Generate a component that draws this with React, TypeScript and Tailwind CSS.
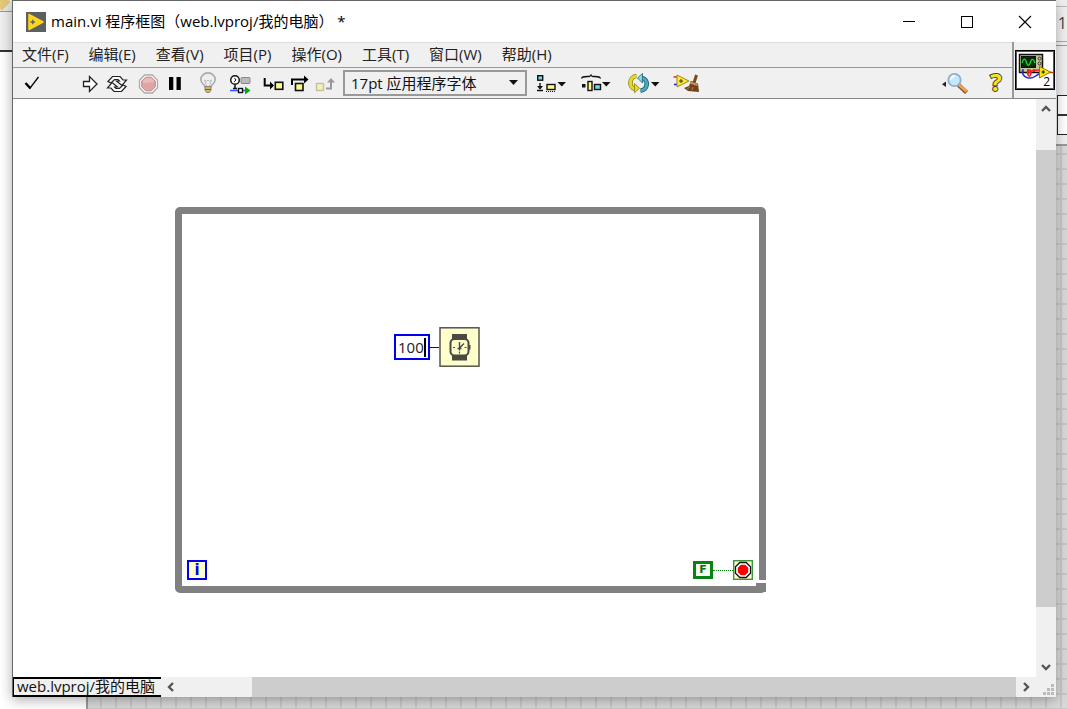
import React from "react";

const menus = ["文件(F)", "编辑(E)", "查看(V)", "项目(P)", "操作(O)", "工具(T)", "窗口(W)", "帮助(H)"];

function Tool({ label, w = 24, children }: { label: string; w?: number; children: React.ReactNode }) {
  return (
    <button type="button" aria-label={label} className="block shrink-0">
      <svg width={w} height={24} viewBox={`0 0 ${w} 24`} fill="none" className="block">
        {children}
      </svg>
    </button>
  );
}

const octagon = (cx: number, cy: number, r: number) => {
  const k = r * 0.42;
  return `${cx - k},${cy - r} ${cx + k},${cy - r} ${cx + r},${cy - k} ${cx + r},${cy + k} ${cx + k},${cy + r} ${cx - k},${cy + r} ${cx - r},${cy + k} ${cx - r},${cy - k}`;
};

function Backdrop() {
  return (
    <div aria-hidden="true" className="absolute inset-0 overflow-hidden bg-white">
      <div className="absolute inset-x-0 top-0 h-13 border-b-2 border-[#333] bg-[#f0f0f0]">
        <div className="h-3 border-b border-[#999] bg-[#e8e8e8]" />
        <div className="absolute -left-1 -top-1 size-3 rotate-45 bg-[#e3c878]" />
      </div>
      <div className="absolute right-0 top-0 h-36 w-[11px] bg-[#f0f0f0]">
        <div className="h-[7px] border-b border-[#bbb]" />
        <div className="h-[35px] border-b border-[#aaa] pt-1 text-right text-[16px] leading-6 text-[#444]">1</div>
        <div className="h-1 border-b border-[#999]" />
        <div className="h-[49px]" />
        <div className="ml-px h-10 border border-r-0 border-[#222] bg-white">
          <div className="h-5 border-b-2 border-[#333]" />
        </div>
      </div>
      <div className="absolute bottom-0 left-[86px] right-0 top-[144px] border-l-2 border-t-2 border-[#999] bg-[#d9d9d9] bg-[linear-gradient(to_right,#c8c8c8_2px,transparent_2px),linear-gradient(to_bottom,#c8c8c8_2px,transparent_2px)] bg-[size:15px_15px] bg-[position:12px_7px]" />
    </div>
  );
}

function TitleBar() {
  return (
    <header className="flex h-[41px] items-center bg-white">
      <svg width="20" height="20" viewBox="0 0 20 20" className="ml-[13px]">
        <rect width="20" height="20" fill="#5d6063" />
        <path d="M3 2.5 17 10 3 17.5z" fill="#ffd51c" stroke="#ffd51c" strokeWidth="1.5" strokeLinejoin="round" />
        <path d="M4.5 10h4.5M6.75 7.8v4.4" stroke="#5d6063" strokeWidth="1.3" />
      </svg>
      <h1 className="ml-[5px] flex-1 whitespace-pre pb-0.5 text-[15px] leading-5 text-black">main.vi 程序框图（web.lvproj/我的电脑） *</h1>
      <div className="mr-0.5 flex text-black">
        <button type="button" aria-label="最小化" className="flex h-10 w-[58px] items-center justify-center">
          <svg width="14" height="14"><path d="M1 6.5h12" stroke="currentColor" /></svg>
        </button>
        <button type="button" aria-label="最大化" className="flex h-10 w-[58px] items-center justify-center">
          <svg width="14" height="14"><rect x="1.5" y="1.5" width="11" height="11" fill="none" stroke="currentColor" /></svg>
        </button>
        <button type="button" aria-label="关闭" className="flex h-10 w-[58px] items-center justify-center">
          <svg width="14" height="14"><path d="m1 1 12 12M13 1 1 13" stroke="currentColor" strokeWidth="1.1" /></svg>
        </button>
      </div>
    </header>
  );
}

function Toolbar() {
  return (
    <div role="toolbar" className="flex h-[30px] items-center pl-[7px]">
      <Tool label="确认">
        <path d="M5.5 12 10.5 17.5" stroke="#000" strokeWidth="2.4" />
        <path d="M9.6 17.6 18.5 6" stroke="#000" strokeWidth="1.3" />
      </Tool>
      <div className="ml-[34px] flex gap-[3px]">
        <Tool label="运行">
          <path d="M5.5 10.5h6V5.500l7.500 7.500-7.500 7.500v-5h-6z" fill="#fff" stroke="#222" strokeWidth="1.300" />
        </Tool>
        <Tool label="连续运行">
          <path d="M3 10.500 7.500 5.500H15L18 9h3.500l-4.500 5.500-5.500-4.500h3L13 8.500H9.500L6 12z" fill="#fff" stroke="#222" strokeWidth="1.200" />
          <path d="M3 10.500 7.500 5.500H15L18 9h3.500l-4.500 5.500-5.500-4.500h3L13 8.500H9.500L6 12z" transform="rotate(180 12 13)" fill="#fff" stroke="#222" strokeWidth="1.200" />
        </Tool>
      </div>
      <div className="ml-2 flex gap-[2px]">
        <Tool label="中止执行">
          <polygon points={octagon(11.5, 13, 9)} fill="#fff" stroke="#aaa" strokeWidth="1.3" />
          <polygon points={octagon(11.5, 13, 6.8)} fill="#dfa4a6" stroke="#b88" />
          <path d="M6 12v-2l3-3h5l3 3v1z" fill="#e9bcbc" />
        </Tool>
        <Tool label="暂停">
          <path d="M6 6h4.3v13H6zM13.5 6h4.3v13h-4.3z" fill="#000" />
        </Tool>
      </div>
      <div className="ml-[9px] flex gap-2">
        <Tool label="高亮显示执行过程">
          <path d="M9 16c0-2-4.2-3.5-4.2-7.5a7.2 6.6 0 0 1 14.4 0C19.2 12.500 15 14 15 16z" fill="#eee" stroke="#aaa" strokeWidth="1.6" />
          <path d="M10.500 15 8.500 9l2 1.500L12 9l1.500 1.500 2-1.500-2 6" stroke="#bbb" />
          <path d="M9 15.500h6v4l-1.500 2h-3L9 19.500z" fill="#d2b65f" stroke="#777" strokeWidth=".8" />
          <path d="M9 18.500h6" stroke="#776633" />
        </Tool>
        <Tool label="保存连线值">
          <circle cx="7" cy="9" r="4.300" fill="#fff" stroke="#111" strokeWidth="1.500" />
          <path d="M6.500 7 8 9l-2 2" stroke="#111" />
          <path d="M7 13.500v4M5 17.500h4" stroke="#111" strokeWidth="1.500" />
          <rect x="13" y="6.500" width="9" height="6" rx="1" fill="#bbb" stroke="#888" />
          <path d="M2 19.500h8M14 19.500h3" stroke="#2a50ff" strokeWidth="1.500" />
          <rect x="10.500" y="17.500" width="4" height="4" fill="#fff" stroke="#111" strokeWidth="1.400" />
          <path d="M17 15.500 22.500 19.500 17 23.500z" fill="#00a800" />
        </Tool>
      </div>
      <div className="ml-[10px] flex gap-[2px]">
        <Tool label="单步步入">
          <path d="M2.700 7v7.500h6" stroke="#000" strokeWidth="2" />
          <path d="M8 10.500 12 14.500 8 18.500z" fill="#000" />
          <rect x="13.300" y="11.300" width="7.500" height="7" fill="#fdf98b" stroke="#111" strokeWidth="1.600" />
        </Tool>
        <Tool label="单步步过">
          <path d="M4 14V8.500h13" stroke="#000" strokeWidth="2" />
          <path d="M16 4.500 20.500 8.500 16 12.500z" fill="#000" />
          <rect x="7.500" y="12.500" width="7.500" height="7" fill="#fdf98b" stroke="#111" strokeWidth="1.600" />
        </Tool>
        <Tool label="单步步出">
          <rect x="2.500" y="12.500" width="7" height="7" fill="#f4f0b8" stroke="#c4c1a0" strokeWidth="1.400" />
          <path d="M12 17.500h5V10" stroke="#999" strokeWidth="2" />
          <path d="M13 11.500 17 7l4 4.500z" fill="#999" />
        </Tool>
      </div>
      <div className="relative ml-[5px]">
        <select aria-label="字体" className="block h-[26px] w-[184px] appearance-none rounded-none border-2 border-[#999] bg-[#f0f0f0] pl-[6px] text-[15px] leading-5 text-[#111] outline-none">
          <option>17pt 应用程序字体</option>
        </select>
        <svg width="9" height="5" className="pointer-events-none absolute right-[9px] top-[10px]"><path d="M0 0h9L4.500 5z" fill="#111" /></svg>
      </div>
      <div className="ml-2 flex gap-3">
        <Tool label="对齐对象" w={32}>
          <rect x="2.700" y="4.700" width="5" height="4.500" fill="#6cd8ee" stroke="#111" strokeWidth="1.400" />
          <path d="M5 12v6M2 19.500h6" stroke="#111" strokeWidth="1.400" />
          <path d="M2 15h6l-3 3.500z" fill="#111" />
          <rect x="12" y="13.500" width="8" height="5" fill="#fdf98b" stroke="#111" strokeWidth="1.400" />
          <path d="M11 20.500h10" stroke="#111" strokeDasharray="1 1" />
          <path d="M22.500 11h8.500l-4.200 4.500z" fill="#111" />
        </Tool>
        <Tool label="分布对象" w={32}>
          <path d="M2.500 7.500C3 5.500 5 5.500 8 5.500s3 0 4-1.500c1 1.500 1 1.500 4 1.500s5 0 5.500 2" stroke="#111" strokeWidth="1.300" />
          <rect x="3" y="13" width="3.500" height="3.500" fill="#111" />
          <rect x="9" y="10.500" width="4" height="9" fill="#fdf98b" stroke="#111" strokeWidth="1.400" />
          <rect x="15.500" y="13.500" width="6" height="5" fill="#6cd8ee" stroke="#111" strokeWidth="1.400" />
          <path d="M23 11h8.500l-4.200 4.500z" fill="#111" />
        </Tool>
      </div>
      <div className="ml-4 flex gap-3">
        <Tool label="重新排序" w={33}>
          <path d="M9.500 5C2.500 5.500 1 16 8 18" stroke="#8b8416" strokeWidth="4.600" />
          <path d="M9.500 5C2.500 5.500 1 16 8 18" stroke="#e5d928" strokeWidth="3" />
          <path d="M7.500 12.500 12.500 17.200 7.500 21.800z" fill="#e5d928" stroke="#8b8416" strokeWidth=".8" />
          <path d="M13.500 19.500C21 19 22 8.500 15 7" stroke="#155f70" strokeWidth="4.600" />
          <path d="M13.500 19.500C21 19 22 8.500 15 7" stroke="#4aa8c0" strokeWidth="3" />
          <path d="M15.500 2.500 10.500 7l5 5z" fill="#8ed6e4" stroke="#155f70" strokeWidth=".8" />
          <path d="M24 11h8.500l-4.200 4.500z" fill="#111" />
        </Tool>
        <Tool label="整理程序框图" w={28}>
          <path d="M1.500 6h6M18 11h4" stroke="#e22" strokeWidth="1.600" />
          <path d="M2 13.500h6" stroke="#22d" strokeWidth="1.600" />
          <path d="M5 4 17 10 5 16z" fill="#ffe82e" stroke="#9b8b20" />
          <path d="M7 10h4M9 8v4" stroke="#333" />
          <path d="m24.500 4-2.500 8" stroke="#7c471b" strokeWidth="3" />
          <path d="m18.500 11 7.500 1.500 1 8.500-11-1-4-3 5-2z" fill="#6f431f" />
          <path d="m18 11.500 7.500 2.500" stroke="#c69352" strokeWidth="2" />
          <path d="m15 18 3-2M20 19l1-3" stroke="#b08050" />
        </Tool>
      </div>
      <div className="ml-auto mr-[6px] flex items-center gap-4">
        <Tool label="搜索" w={30}>
          <path d="M6 10.500v5.500L2 13.200z" fill="#222" />
          <path d="m18.500 14 8 7.500" stroke="#8e5323" strokeWidth="4.400" />
          <path d="m18.500 13.500 8 7" stroke="#eda358" strokeWidth="2.600" />
          <circle cx="14.500" cy="9" r="6.200" fill="#c5e9fb" stroke="#8eafd0" strokeWidth="1.800" />
          <path d="M11 8.500a4 4 0 0 1 4-3.500" stroke="#fff" strokeWidth="2" />
        </Tool>
        <button type="button" aria-label="即时帮助" className="flex h-6 w-5 items-center justify-center pb-0.5 text-[24px] font-bold leading-6 text-[#f5e51b] [-webkit-text-stroke:2px_#444] [paint-order:stroke_fill]">?</button>
      </div>
    </div>
  );
}

function ViIcon() {
  return (
    <div className="flex w-11 shrink-0 items-center border-l-2 border-[#999] bg-[#f0f0f0] pl-px">
      <div className="relative size-10 border border-black bg-white outline-1 -outline-offset-2 outline-[#555]">
        <svg width="38" height="38" viewBox="0 0 38 38" fill="none">
          <rect x="3.500" y="3.500" width="23" height="18" fill="#c9c69c" stroke="#111" strokeWidth="1.500" />
          <rect x="5.500" y="5.500" width="14" height="11" fill="#062b06" stroke="#111" />
          <path d="M6 12c1.500-5 3-5 4.500-.5s3 3 4-.5 2.500-4 4.500 1" stroke="#1fdc3a" strokeWidth="1.300" />
          <circle cx="23.500" cy="7.500" r="1.500" stroke="#333" />
          <circle cx="23.500" cy="12.500" r="1.500" stroke="#333" />
          <path d="M7 18v4M12 18v4M18 18v3" stroke="#111" />
          <path d="M6.500 19c-1 8 8 10 13 6l5-3" stroke="#2430d0" strokeWidth="1.500" />
          <path d="M12 24c-2-5 4-7 3-2s-3 3-3 1c2-4 7-4 12-4M32 21.500h5" stroke="#e22" strokeWidth="1.500" />
          <path d="m23.500 15.500 11 5.500-11 6z" fill="#ffe500" stroke="#8b7b00" />
          <path d="M25.500 21h3.500M27.200 19.200v3.600" stroke="#111" />
        </svg>
        <span className="absolute bottom-px right-1 text-[12px] leading-3 text-black">2</span>
      </div>
    </div>
  );
}

function Diagram() {
  return (
    <main className="relative min-w-0 flex-1 overflow-hidden bg-white">
      <div className="absolute left-[162px] top-[108px] h-[386px] w-[591px] rounded-[5px] border-[7px] border-[#808080]">
        <div className="absolute left-[5px] top-[346px] flex size-5 items-center justify-center border-2 border-[#0000f0] bg-[#ffffcc] font-['DejaVu_Sans',sans-serif] text-[15px] font-bold leading-4 text-[#0000f0]">i</div>
        <div className="absolute left-[511px] top-[346px] flex items-center">
          <div className="flex h-[18px] w-5 items-center justify-center border-3 border-[#0a8214] bg-[#f4fff0] font-['DejaVu_Sans',sans-serif] text-[11px] font-bold leading-3 text-[#0a6e14]">F</div>
          <div className="w-5 border-t border-dotted border-[#0a8214]" />
          <svg width="20" height="20" viewBox="0 0 20 20">
            <rect x=".7" y=".7" width="18.600" height="18.600" fill="#ffffcc" stroke="#3c963c" strokeWidth="1.400" />
            <polygon points={octagon(10, 10, 7.5)} fill="#fff" stroke="#111" strokeWidth="1.300" />
            <polygon points={octagon(10, 10, 5.2)} fill="#f00" />
          </svg>
        </div>
        <div className="absolute -bottom-[6px] -right-[7px] h-3 w-[10px] border-t-3 border-white bg-[#808080]" />
      </div>
      <div className="absolute left-[381px] top-[228px] flex items-center">
        <div className="relative">
          <input aria-label="等待时间(毫秒)" defaultValue="100" className="block h-[26px] w-9 border-2 border-[#0000f0] bg-white pl-[2px] text-[15px] leading-5 text-[#222] outline-none" />
          <div className="absolute right-[4px] top-1 h-[19px] w-0.5 bg-black" />
        </div>
        <div className="h-px w-[9px] bg-[#0000f0]" />
        <svg width="41" height="40" viewBox="0 0 41 40" fill="none">
          <rect x="1" y=".8" width="39" height="38.400" fill="#ffffcc" stroke="#55554b" strokeWidth="1.500" />
          <path d="M13 7h15v6H13zM13 27h15v6.500H13z" fill="#4a4a40" />
          <rect x="11.500" y="12" width="18" height="16.500" rx="4" fill="#ffffcc" stroke="#4a4a40" strokeWidth="2" />
          <path d="M30.500 18v4.500" stroke="#4a4a40" strokeWidth="2" />
          <path d="M20.500 15v8.500M20.500 21l4.500-4.500M18.500 21.500h4" stroke="#4a4a40" strokeWidth="1.400" />
          <path d="M14 20.500h2M25.500 20.500h2M20.500 24.500v2" stroke="#4a4a40" strokeWidth="1.200" />
        </svg>
      </div>
    </main>
  );
}

function Chevron({ d, label }: { d: string; label: string }) {
  return (
    <button type="button" aria-label={label} className="flex size-5 shrink-0 items-center justify-center">
      <svg width="12" height="12" fill="none"><path d={d} stroke="#555" strokeWidth="2.400" /></svg>
    </button>
  );
}

export default function App() {
  return (
    <div className="relative h-screen overflow-hidden pb-3 pl-3 pr-[11px] font-['Open_Sans','Noto_Sans_CJK_SC',sans-serif]">
      <Backdrop />
      <div className="relative flex h-full flex-col border-l border-t border-[#666] bg-[#f0f0f0] shadow-[0_3px_12px_rgba(0,0,0,0.32)]">
        <TitleBar />
        <div className="flex border-b border-[#888]">
          <div className="min-w-0 flex-1">
            <nav className="flex h-[26px] items-center gap-5 border-b border-t border-b-[#999] border-t-[#ddd] pb-[3px] pl-[9px]">
              {menus.map((m) => (
                <button type="button" key={m} className="shrink-0 text-[15px] leading-5 text-[#222]">{m}</button>
              ))}
            </nav>
            <Toolbar />
          </div>
          <ViIcon />
        </div>
        <div className="flex min-h-0 flex-1">
          <Diagram />
          <div className="flex w-5 shrink-0 flex-col bg-[#f0f0f0]">
            <Chevron label="向上滚动" d="M2 8l4-4 4 4" />
            <div className="flex min-h-0 flex-1 flex-col">
              <div className="flex-[31]" />
              <div className="flex-[457] bg-[#cdcdcd]" />
              <div className="flex-[50]" />
            </div>
            <Chevron label="向下滚动" d="M2 4l4 4 4-4" />
          </div>
        </div>
        <div className="flex h-5 shrink-0 items-center bg-[#f0f0f0]">
          <div className="flex h-full w-[148px] shrink-0 items-center whitespace-nowrap border-y-2 border-l border-black pb-[3px] pl-[3px] text-[15px] leading-4 text-[#111]">web.lvproj/我的电脑</div>
          <Chevron label="向左滚动" d="M8 2 4 6l4 4" />
          <div className="flex h-full min-w-0 flex-1">
            <div className="flex-[71]" />
            <div className="flex-[763] bg-[#cdcdcd]" />
          </div>
          <Chevron label="向右滚动" d="M4 2l4 4-4 4" />
          <svg width="20" height="20" fill="#bbb">
            <path d="M15 7h3v3h-3zM11 11h3v3h-3zM15 11h3v3h-3zM7 15h3v3H7zM11 15h3v3h-3zM15 15h3v3h-3z" />
          </svg>
        </div>
      </div>
    </div>
  );
}
